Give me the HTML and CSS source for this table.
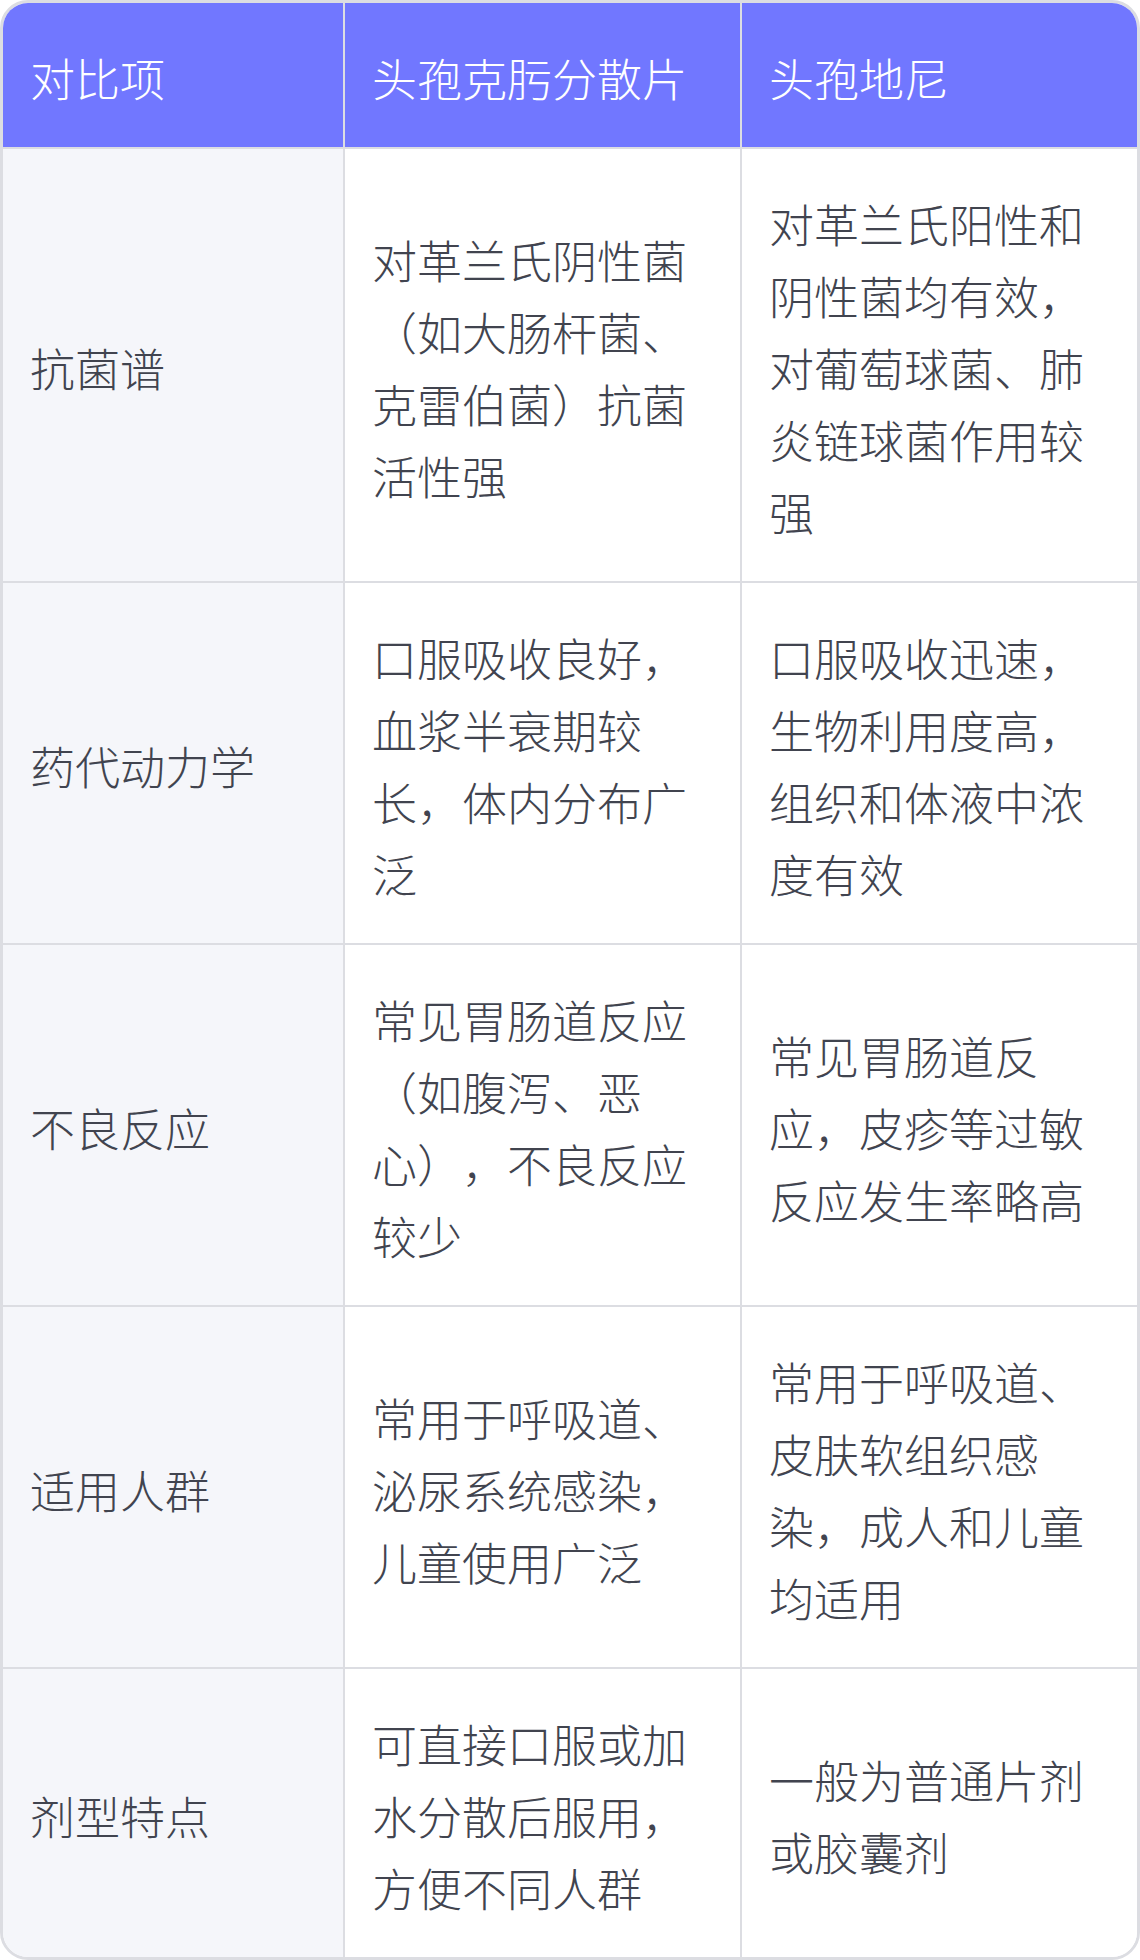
FILE: index.html
```html
<!DOCTYPE html>
<html lang="zh-CN">
<head>
<meta charset="utf-8">
<title>对比</title>
<link rel="stylesheet" href="styles.css">
</head>
<body>
<div class="wrap">
  <table class="cmp">
    <colgroup>
      <col class="c1">
      <col class="c2">
      <col class="c3">
    </colgroup>
    <thead>
      <tr>
        <th>对比项</th>
        <th>头孢克肟分散片</th>
        <th>头孢地尼</th>
      </tr>
    </thead>
    <tbody>
      <tr>
        <td class="key">抗菌谱</td>
        <td>对革兰氏阴性菌（如大肠杆菌、克雷伯菌）抗菌活性强</td>
        <td>对革兰氏阳性和阴性菌均有效，对葡萄球菌、肺炎链球菌作用较强</td>
      </tr>
      <tr>
        <td class="key">药代动力学</td>
        <td>口服吸收良好，血浆半衰期较长，体内分布广泛</td>
        <td>口服吸收迅速，生物利用度高，组织和体液中浓度有效</td>
      </tr>
      <tr>
        <td class="key">不良反应</td>
        <td>常见胃肠道反应（如腹泻、恶心），不良反应较少</td>
        <td>常见胃肠道反应，皮疹等过敏反应发生率略高</td>
      </tr>
      <tr>
        <td class="key">适用人群</td>
        <td>常用于呼吸道、泌尿系统感染，儿童使用广泛</td>
        <td>常用于呼吸道、皮肤软组织感染，成人和儿童均适用</td>
      </tr>
      <tr>
        <td class="key">剂型特点</td>
        <td>可直接口服或加水分散后服用，方便不同人群</td>
        <td>一般为普通片剂或胶囊剂</td>
      </tr>
    </tbody>
  </table>
</div>
</body>
</html>
```

FILE: styles.css
```css
html, body {
  margin: 0;
  padding: 0;
  background: #ffffff;
}

body {
  font-family: "Noto Sans CJK SC", "Noto Sans", sans-serif;
  font-size: 45px;
  line-height: 72px;
  color: #41444f;
  text-spacing-trim: space-all;
}

.wrap {
  width: 1140px;
  height: 1960px;
  box-sizing: border-box;
  border: 3px solid #dcdde2;
  border-radius: 28px;
  overflow: hidden;
}

.cmp {
  width: 1134px;
  table-layout: fixed;
  border-collapse: separate;
  border-spacing: 0;
}

.c1 { width: 342px; }
.c2 { width: 397px; }
.c3 { width: 395px; }

.cmp th,
.cmp td {
  box-sizing: border-box;
  padding: 39px 27px 33px;
  text-align: left;
  vertical-align: middle;
  border-right: 2px solid #dcdde2;
  border-bottom: 2px solid #dcdde2;
  font-weight: 300;
  text-spacing-trim: space-all;
}

.cmp th:last-child,
.cmp td:last-child {
  border-right: none;
}

.cmp tbody tr:last-child td {
  border-bottom: none;
}

.cmp th {
  background: #7177ff;
  color: #ffffff;
}

.cmp td {
  background: #ffffff;
}

.cmp td.key {
  background: #f5f6fa;
}
```
